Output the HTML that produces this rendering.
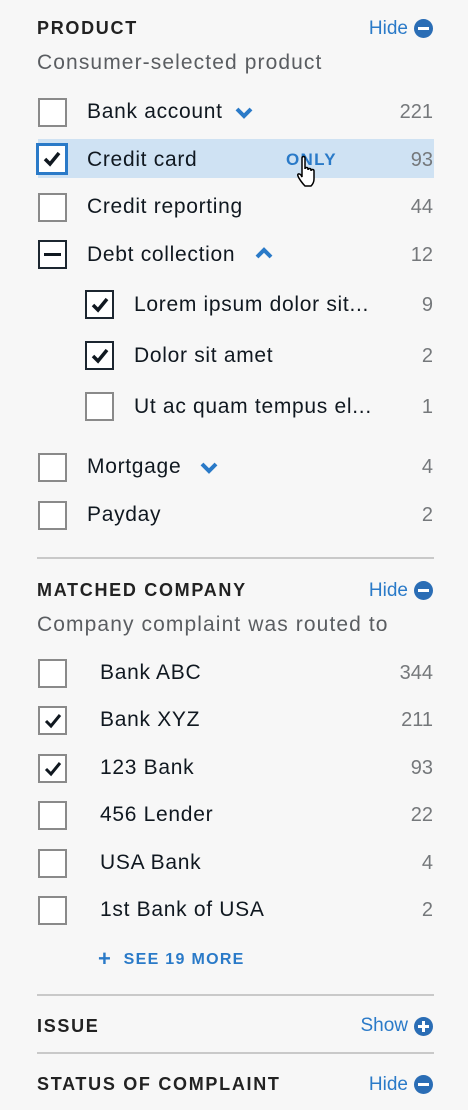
<!DOCTYPE html>
<html><head><meta charset="utf-8"><style>
*{margin:0;padding:0;box-sizing:border-box}
body{width:468px;height:1110px;background:#f7f7f7;font-family:"Liberation Sans",sans-serif;color:#101820;position:relative;overflow:hidden}
.a{position:absolute;white-space:nowrap;line-height:24px}
.h{font-weight:bold;font-size:18px;letter-spacing:1.7px;color:#222}
.sub{font-size:21px;color:#5a5d61;letter-spacing:1.1px}
.l{font-size:21px;letter-spacing:.7px}
.n{font-size:20px;color:#75787b;right:35px;text-align:right}
.cb{position:absolute;width:29px;height:29px;border:2px solid #8a8a8a;background:#fff}
.cb.d{border-color:#1c2630}
.lk{color:#2a7ac8;font-size:19px;right:60px}
.ic{position:absolute;width:19px;height:19px;border-radius:50%;background:#2a6db5}
.ic:before{content:"";position:absolute;left:4px;top:8px;width:11px;height:3px;background:#fff}
.ic.p:after{content:"";position:absolute;left:8px;top:4px;width:3px;height:11px;background:#fff}
.hr{position:absolute;left:37px;width:397px;height:2px;background:#c9c9c9}
svg{position:absolute}
</style></head><body>

<div class="a h" style="left:37px;top:16px">PRODUCT</div>
<div class="a lk" style="top:17px">Hide</div><div class="ic" style="left:414px;top:19px"></div>
<div class="a sub" style="left:37px;top:51px">Consumer-selected product</div>

<div style="position:absolute;left:38px;top:139px;width:396px;height:39px;background:#cfe2f3"></div>

<div class="cb" style="left:38px;top:98px"></div>
<div class="a l" style="left:87px;top:100px">Bank account</div>
<svg style="left:234px;top:106px" width="20" height="14" viewBox="0 0 20 14"><path d="M3 3l7 7 7-7" stroke="#2a7ac8" stroke-width="4" fill="none"/></svg>
<div class="a n" style="top:100px">221</div>

<div class="cb" style="left:36px;top:143px;width:32px;height:32px;border:3px solid #2a7ac8"></div>
<svg style="left:42px;top:149px" width="20" height="20" viewBox="0 0 20 20"><path d="M3 10l5 5 9-11" stroke="#101820" stroke-width="3.5" fill="none"/></svg>
<div class="a l" style="left:87px;top:148px">Credit card</div>
<div class="a" style="left:286px;top:148px;font-size:17px;font-weight:bold;letter-spacing:1.3px;color:#2a7ac8">ONLY</div>
<svg style="left:296px;top:155px" width="26" height="34" viewBox="0 0 26 34"><path d="M6 3c0-2 3-2 3 0v11c0-2 3-2 3 0v1c0-2 3-2 3 0v1c0-2 3-2 3 0v8c0 3-1 5-3 7H9c-2-2-6-7-7-10-1-2 1-3 3-1l1 2z" fill="#fff" stroke="#000" stroke-width="1.5"/></svg>
<div class="a n" style="top:148px">93</div>

<div class="cb" style="left:38px;top:193px"></div>
<div class="a l" style="left:87px;top:195px">Credit reporting</div>
<div class="a n" style="top:195px">44</div>

<div class="cb d" style="left:38px;top:240px"></div>
<div style="position:absolute;left:44px;top:253px;width:17px;height:3px;background:#101820"></div>
<div class="a l" style="left:87px;top:243px">Debt collection</div>
<svg style="left:254px;top:246px" width="20" height="14" viewBox="0 0 20 14"><path d="M3 11l7-7 7 7" stroke="#2a7ac8" stroke-width="4" fill="none"/></svg>
<div class="a n" style="top:243px">12</div>

<div class="cb d" style="left:85px;top:290px"></div>
<svg style="left:90px;top:295px" width="20" height="20" viewBox="0 0 20 20"><path d="M3 10l5 5 9-11" stroke="#101820" stroke-width="3.5" fill="none"/></svg>
<div class="a l" style="left:134px;top:293px">Lorem ipsum dolor sit...</div>
<div class="a n" style="top:293px">9</div>

<div class="cb d" style="left:85px;top:341px"></div>
<svg style="left:90px;top:346px" width="20" height="20" viewBox="0 0 20 20"><path d="M3 10l5 5 9-11" stroke="#101820" stroke-width="3.5" fill="none"/></svg>
<div class="a l" style="left:134px;top:344px">Dolor sit amet</div>
<div class="a n" style="top:344px">2</div>

<div class="cb" style="left:85px;top:392px"></div>
<div class="a l" style="left:134px;top:395px">Ut ac quam tempus el...</div>
<div class="a n" style="top:395px">1</div>

<div class="cb" style="left:38px;top:453px"></div>
<div class="a l" style="left:87px;top:455px">Mortgage</div>
<svg style="left:199px;top:461px" width="20" height="14" viewBox="0 0 20 14"><path d="M3 3l7 7 7-7" stroke="#2a7ac8" stroke-width="4" fill="none"/></svg>
<div class="a n" style="top:455px">4</div>

<div class="cb" style="left:38px;top:501px"></div>
<div class="a l" style="left:87px;top:503px">Payday</div>
<div class="a n" style="top:503px">2</div>

<div class="hr" style="top:557px"></div>

<div class="a h" style="left:37px;top:578px">MATCHED COMPANY</div>
<div class="a lk" style="top:579px">Hide</div><div class="ic" style="left:414px;top:581px"></div>
<div class="a sub" style="left:37px;top:613px">Company complaint was routed to</div>

<div class="cb" style="left:38px;top:659px"></div>
<div class="a l" style="left:100px;top:661px">Bank ABC</div>
<div class="a n" style="top:661px">344</div>

<div class="cb" style="left:38px;top:706px"></div>
<svg style="left:43px;top:711px" width="20" height="20" viewBox="0 0 20 20"><path d="M3 10l5 5 9-11" stroke="#101820" stroke-width="3" fill="none"/></svg>
<div class="a l" style="left:100px;top:708px">Bank XYZ</div>
<div class="a n" style="top:708px">211</div>

<div class="cb" style="left:38px;top:754px"></div>
<svg style="left:43px;top:759px" width="20" height="20" viewBox="0 0 20 20"><path d="M3 10l5 5 9-11" stroke="#101820" stroke-width="3" fill="none"/></svg>
<div class="a l" style="left:100px;top:756px">123 Bank</div>
<div class="a n" style="top:756px">93</div>

<div class="cb" style="left:38px;top:801px"></div>
<div class="a l" style="left:100px;top:803px">456 Lender</div>
<div class="a n" style="top:803px">22</div>

<div class="cb" style="left:38px;top:849px"></div>
<div class="a l" style="left:100px;top:851px">USA Bank</div>
<div class="a n" style="top:851px">4</div>

<div class="cb" style="left:38px;top:896px"></div>
<div class="a l" style="left:100px;top:898px">1st Bank of USA</div>
<div class="a n" style="top:898px">2</div>

<div class="a" style="left:98px;top:947px;font-size:16px;font-weight:bold;letter-spacing:1.3px;color:#2a7ac8"><span style="font-size:22px;vertical-align:-2px">+</span>&nbsp;&nbsp;SEE 19 MORE</div>

<div class="hr" style="top:994px"></div>
<div class="a h" style="left:37px;top:1014px">ISSUE</div>
<div class="a lk" style="top:1014px">Show</div><div class="ic p" style="left:414px;top:1017px"></div>

<div class="hr" style="top:1052px"></div>
<div class="a h" style="left:37px;top:1072px">STATUS OF COMPLAINT</div>
<div class="a lk" style="top:1073px">Hide</div><div class="ic" style="left:414px;top:1075px"></div>
</body></html>
